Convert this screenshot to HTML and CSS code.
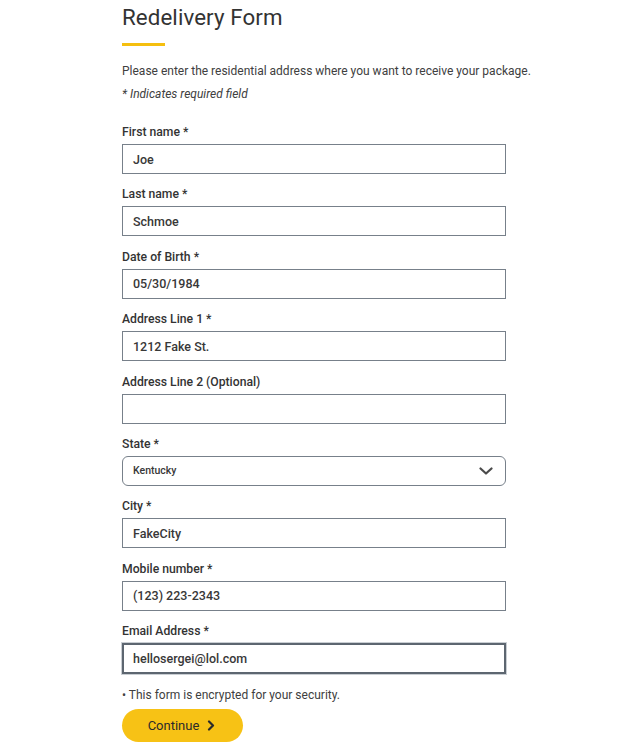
FILE: index.html
```html
<!DOCTYPE html>
<html lang="en">
<head>
<meta charset="utf-8">
<title>Redelivery Form</title>
<link rel="stylesheet" href="styles.css">
</head>
<body>
<main class="page">
  <h1 class="title">Redelivery Form</h1>
  <div class="title-bar"></div>
  <p class="intro">Please enter the residential address where you want to receive your package.</p>
  <p class="required-note">* Indicates required field</p>
  <form class="form">
    <div class="field">
      <label class="label">First name *</label>
      <div class="input">Joe</div>
    </div>
    <div class="field">
      <label class="label">Last name *</label>
      <div class="input">Schmoe</div>
    </div>
    <div class="field">
      <label class="label">Date of Birth *</label>
      <div class="input">05/30/1984</div>
    </div>
    <div class="field">
      <label class="label">Address Line 1 *</label>
      <div class="input">1212 Fake St.</div>
    </div>
    <div class="field">
      <label class="label">Address Line 2 (Optional)</label>
      <div class="input"></div>
    </div>
    <div class="field">
      <label class="label">State *</label>
      <div class="input select">
        <span class="select-value">Kentucky</span>
        <svg class="chevron-down" width="14" height="8" viewBox="0 0 14 8"><path d="M1.5 1.5 L7 6.5 L12.5 1.5" fill="none" stroke="#4a4a4a" stroke-width="2.2" stroke-linecap="round" stroke-linejoin="round"/></svg>
      </div>
    </div>
    <div class="field">
      <label class="label">City *</label>
      <div class="input">FakeCity</div>
    </div>
    <div class="field">
      <label class="label">Mobile number *</label>
      <div class="input">(123) 223-2343</div>
    </div>
    <div class="field">
      <label class="label">Email Address *</label>
      <div class="input focused">hellosergei@lol.com</div>
    </div>
    <p class="secure">• This form is encrypted for your security.</p>
    <button type="button" class="btn">Continue
      <svg class="chevron-right" width="8" height="11" viewBox="0 0 8 11"><path d="M2 1.5 L6 5.5 L2 9.5" fill="none" stroke="#2b2b2b" stroke-width="2.2" stroke-linecap="round" stroke-linejoin="round"/></svg>
    </button>
  </form>
</main>
</body>
</html>
```
FILE: styles.css
```css
html, body {
  margin: 0;
  padding: 0;
  background: #ffffff;
}
body {
  font-family: Roboto, "Liberation Sans", Arial, sans-serif;
  color: #333333;
}
.page {
  padding: 3px 0 0 122px;
  width: 384px;
}
.title {
  margin: 0;
  font-size: 22.3px;
  font-weight: 400;
  line-height: 28px;
  color: #333333;
  letter-spacing: 0.1px;
}
.title-bar {
  width: 43px;
  height: 3px;
  background: #f5bf0f;
  margin-top: 12px;
}
.intro {
  margin: 17px 0 0;
  font-size: 12px;
  line-height: 16px;
  color: #404040;
  white-space: nowrap;
}
.required-note {
  margin: 7px 0 0;
  font-size: 12px;
  line-height: 16px;
  font-style: italic;
  color: #404040;
}
.form {
  display: flex;
  flex-direction: column;
  margin-top: 22px;
}
.field {
  display: flex;
  flex-direction: column;
  gap: 4px;
  margin-bottom: 12.4px;
}
.label {
  font-size: 12.2px;
  line-height: 16px;
  font-weight: 500;
  color: #333333;
}
.input {
  box-sizing: border-box;
  height: 30px;
  border: 1px solid #77808a;
  padding: 0 10px;
  display: flex;
  align-items: center;
  font-size: 12.5px;
  font-weight: 500;
  color: #383838;
  background: #fff;
}
.select {
  border-radius: 6px;
  justify-content: space-between;
  padding: 0 12px 0 10px;
}
.select-value {
  font-size: 10.5px;
}
.focused {
  height: 31px;
  border: 2px solid #5d6670;
  box-shadow: 0 0 0 1px #c9ced3;
  padding: 0 9px;
}
.secure {
  margin: 0;
  font-size: 12px;
  line-height: 16px;
  color: #404040;
}
.btn {
  margin-top: 6px;
  width: 121px;
  height: 33px;
  border: none;
  border-radius: 17px;
  background: #f7c215;
  display: flex;
  align-items: center;
  justify-content: center;
  gap: 8px;
  font-family: Roboto, "Liberation Sans", Arial, sans-serif;
  font-size: 13px;
  color: #2b2b2b;
  padding: 0 2px 0 0;
}
```
